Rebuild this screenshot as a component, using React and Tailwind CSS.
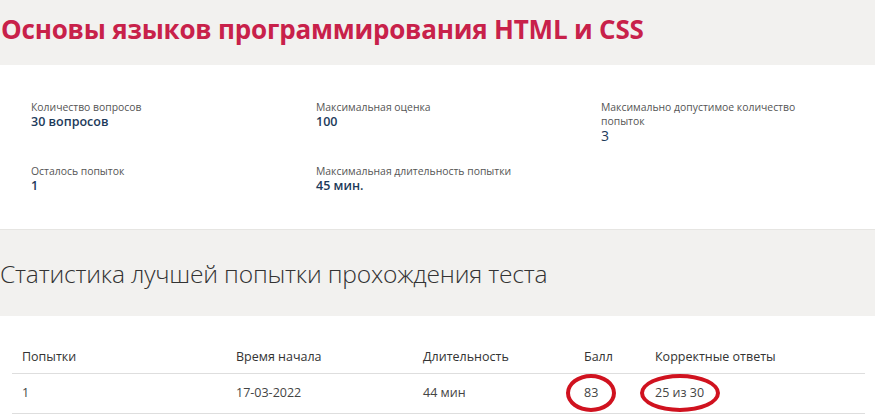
import React from "react";

const info = [
  { label: "Количество вопросов", value: "30 вопросов", bold: true },
  { label: "Максимальная оценка", value: "100", bold: true },
  { label: "Максимально допустимое количество попыток", value: "3", bold: false },
  { label: "Осталось попыток", value: "1", bold: true },
  { label: "Максимальная длительность попытки", value: "45 мин.", bold: true },
];

const Circled = ({ children, className }) => (
  <span className="relative inline-block">
    {children}
    <span
      className={`absolute top-1/2 left-1/2 -translate-x-1/2 -translate-y-1/2 rounded-[50%] border-4 border-[#d0121f] ${className}`}
    />
  </span>
);

export default function App() {
  return (
    <div
      className="w-[875px] h-[414px] overflow-hidden bg-white text-[#333]"
      style={{ fontFamily: '"Open Sans", "Noto Sans", sans-serif' }}
    >
      <div className="h-[65px] bg-[#f2f1ef] flex items-center">
        <h1 className="text-[26px] font-bold text-[#c8214a] tracking-[-0.2px] leading-none pl-[1px] pb-[7px]">
          Основы языков программирования HTML и CSS
        </h1>
      </div>

      <div className="h-[164px] bg-white grid grid-cols-[285px_285px_1fr] content-start pl-[31px] pt-[35px] gap-y-[20px]">
        {info.map((item) => (
          <div key={item.label} className="pr-[60px]">
            <div className="text-[10.4px] leading-[14px] text-[#555]">{item.label}</div>
            <div
              className={`leading-[16px] text-[#1d3a5a] ${
                item.bold ? "font-semibold text-[12.5px]" : "font-normal text-[14px]"
              }`}
            >
              {item.value}
            </div>
          </div>
        ))}
      </div>

      <div className="h-[87px] bg-[#f2f1ef] border-t border-[#e6e5e2] flex items-center">
        <h2 className="text-[24.6px] font-light text-[#333] leading-none tracking-[-0.2px] pt-[2px]">
          Статистика лучшей попытки прохождения теста
        </h2>
      </div>

      <div className="px-[12px] pt-[32px]">
        <table className="w-[853px] table-fixed text-[12.5px] text-left">
          <thead>
            <tr className="border-b border-[#dedede] h-[25px]">
              <th className="font-normal w-[224px] pl-[10px] align-top">Попытки</th>
              <th className="font-normal w-[187px] align-top">Время начала</th>
              <th className="font-normal w-[161px] align-top">Длительность</th>
              <th className="font-normal w-[71px] align-top">Балл</th>
              <th className="font-normal align-top">Корректные ответы</th>
            </tr>
          </thead>
          <tbody>
            <tr className="border-b border-[#dedede] h-[40px] text-[#444]">
              <td className="pl-[10px]">1</td>
              <td>17-03-2022</td>
              <td>44 мин</td>
              <td>
                <Circled className="w-[50px] h-[38px]">83</Circled>
              </td>
              <td>
                <Circled className="w-[80px] h-[38px]">25 из 30</Circled>
              </td>
            </tr>
          </tbody>
        </table>
      </div>
    </div>
  );
}
